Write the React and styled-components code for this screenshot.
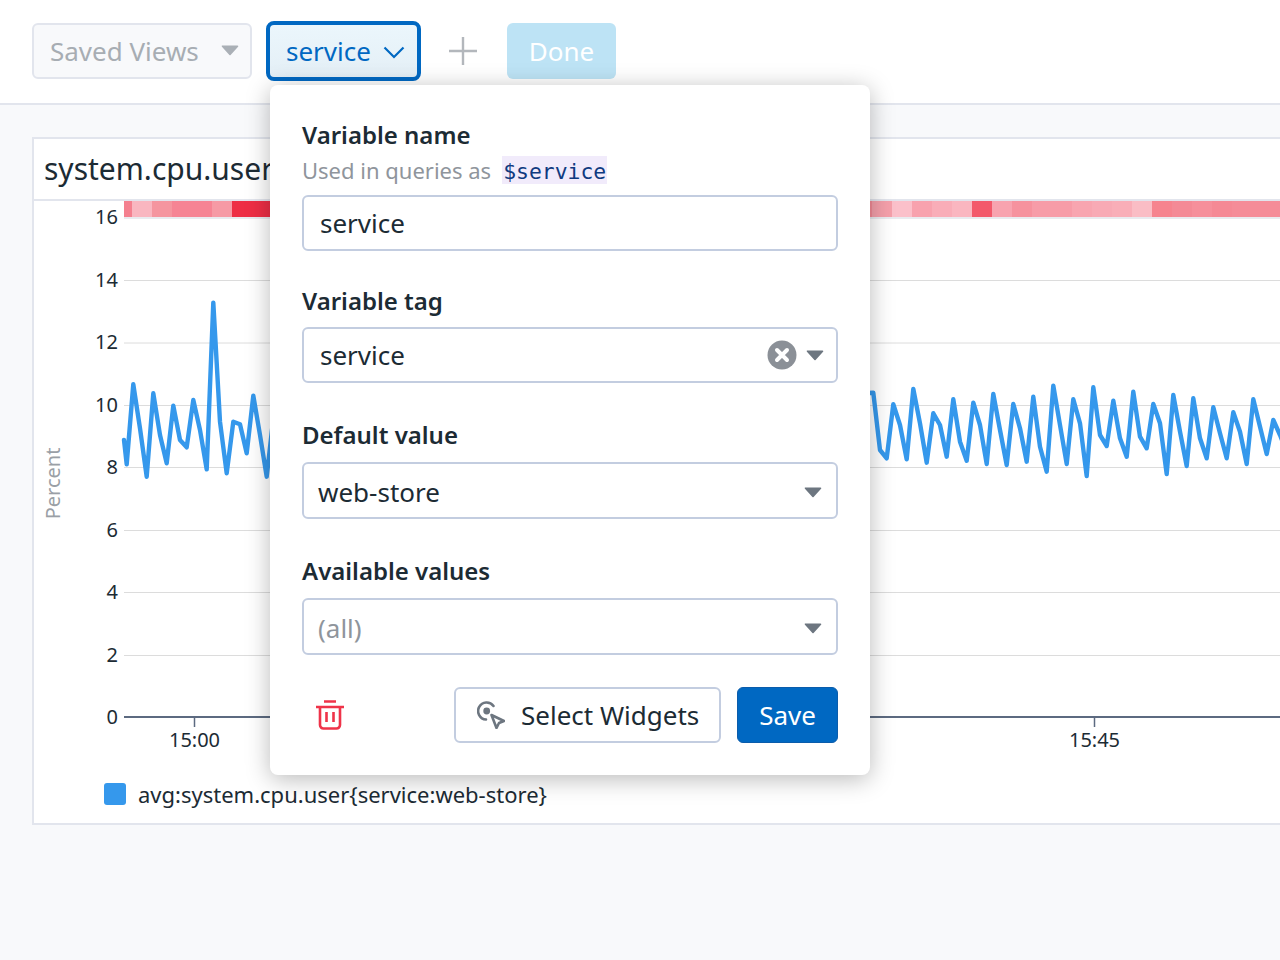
import React from "react";
import styled, { createGlobalStyle } from "styled-components";

const Global = createGlobalStyle`
  html, body { margin: 0; padding: 0; background: #f8f9fb; }
  * { box-sizing: border-box; }
  body { font-family: "Noto Sans", "Open Sans", sans-serif; color: #1c2b34; }
`;

const Page = styled.div`
  position: relative;
  width: 1280px;
  height: 960px;
  overflow: hidden;
  background: #f8f9fb;
`;

const Toolbar = styled.header`
  height: 105px;
  display: flex;
  align-items: center;
  padding: 0 0 2px 32px;
  background: #fff;
  border-bottom: 2px solid #e2e5ed;
`;

const SavedViews = styled.div`
  width: 220px;
  height: 56px;
  display: flex;
  align-items: center;
  justify-content: space-between;
  padding: 0 11px 0 16px;
  font-size: 26px;
  color: #a7adb3;
  background: #f8f9fb;
  border: 2px solid #e2e5ed;
  border-radius: 6px;
`;

const VariableChip = styled.div`
  width: 155px;
  height: 60px;
  margin-left: 14px;
  display: flex;
  align-items: center;
  justify-content: space-between;
  padding: 0 12px 0 16px;
  font-size: 26px;
  color: #0068c2;
  background: linear-gradient(#ebf6fc, #e4eff6);
  border: 4px solid #0068c2;
  border-radius: 8px;
`;

const Chevron = styled.svg`
  width: 22px;
  height: 13px;
  margin-top: 3px;
`;

const AddButton = styled.div`
  width: 28px;
  height: 28px;
  margin-left: 28px;
  display: flex;
`;

const DoneButton = styled.div`
  width: 109px;
  height: 56px;
  margin-left: 30px;
  display: flex;
  align-items: center;
  justify-content: center;
  font-size: 26px;
  color: #fff;
  background: #bde3f5;
  border-radius: 6px;
`;

const Content = styled.main`
  padding: 32px 0 0 32px;
`;

const Card = styled.section`
  width: 1260px;
  height: 688px;
  background: #fff;
  border: 2px solid #e2e5ed;
`;

const CardTitle = styled.div`
  height: 62px;
  padding: 0 0 2px 10px;
  display: flex;
  align-items: center;
  font-size: 30px;
  color: #1c2b34;
  border-bottom: 2px solid #e2e5ed;
`;

const ChartSvg = styled.svg`
  display: block;
  width: 1246px;
  height: 570px;
`;

const AxisLabel = styled.text`
  font-family: "Noto Sans", sans-serif;
  font-size: 20px;
  fill: #1c2b34;
`;

const UnitLabel = styled.text`
  font-family: "Noto Sans", sans-serif;
  font-size: 20px;
  fill: #9a9fa6;
`;

const Legend = styled.div`
  display: flex;
  align-items: center;
  gap: 12px;
  padding: 7px 0 0 70px;
  font-size: 22px;
  line-height: 32px;
  color: #1c2b34;
`;

const Swatch = styled.span`
  width: 22px;
  height: 22px;
  border-radius: 3px;
  background: #3598ec;
`;

const Popover = styled.div`
  position: absolute;
  left: 270px;
  top: 85px;
  width: 600px;
  height: 690px;
  padding: 32px 32px 0;
  background: #fff;
  border-radius: 8px;
  box-shadow: 0 4px 24px rgba(0, 0, 0, 0.28);
`;

const FieldLabel = styled.div`
  margin-top: ${(p) => p.$top || 0}px;
  font-size: 24px;
  line-height: 36px;
  font-weight: 600;
  color: #1c2b34;
`;

const Hint = styled.div`
  display: flex;
  align-items: center;
  gap: 11px;
  height: 30px;
  margin-top: 2px;
  font-size: 22px;
  color: #8f959c;
`;

const Code = styled.code`
  padding: 2px 1px 0;
  height: 28px;
  line-height: 28px;
  font-family: "DejaVu Sans Mono", "Liberation Mono", monospace;
  font-size: 21.4px;
  color: #0f3a80;
  background: #f1ebfb;
`;

const Field = styled.div`
  width: 536px;
  height: ${(p) => p.$h || 56}px;
  margin-top: ${(p) => p.$top || 4}px;
  display: flex;
  align-items: center;
  padding: ${(p) => p.$pad || 0}px ${(p) => p.$right ?? 12}px 0 ${(p) => p.$left ?? 16}px;
  font-size: 26px;
  color: ${(p) => (p.$muted ? "#8f959c" : "#1c2b34")};
  background: #fff;
  border: 2px solid #c3cde0;
  border-radius: 6px;
`;

const FieldValue = styled.span`
  flex: 1;
`;

const ClearIcon = styled.svg`
  width: 30px;
  height: 30px;
  margin-right: 9px;
`;

const Actions = styled.div`
  display: flex;
  align-items: center;
  margin-top: 32px;
`;

const DeleteButton = styled.div`
  width: 28px;
  height: 30px;
  margin-left: 14px;
  margin-right: auto;
  display: flex;
`;

const SecondaryButton = styled.div`
  width: 267px;
  height: 56px;
  display: flex;
  align-items: center;
  gap: 16px;
  padding: 0 0 0 21px;
  font-size: 26px;
  white-space: nowrap;
  color: #1c2b34;
  background: #fff;
  border: 2px solid #c3cde0;
  border-radius: 6px;
`;

const PrimaryButton = styled.div`
  width: 101px;
  height: 56px;
  margin-left: 16px;
  display: flex;
  align-items: center;
  justify-content: center;
  font-size: 26px;
  color: #fff;
  background: #0068c2;
  border: 1px solid #0b5cab;
  border-radius: 6px;
`;

const Caret = ({ color = "#6d7680", w = 18 }) => (
  <svg width={w} height="11" viewBox="0 0 18 11">
    <path d="M1.5 1.2h15L9 9.5z" fill={color} stroke={color} strokeWidth="1.6" strokeLinejoin="round" />
  </svg>
);

const gridYs = [280.5, 343, 405.5, 467.5, 530.5, 592.5, 655.5];
const yLabels = [
  ["16", 224], ["14", 287], ["12", 349], ["10", 412], ["8", 474],
  ["6", 537], ["4", 599], ["2", 662], ["0", 724],
];

const heatCells = [
  [124, 8, "#f4808f"], [132, 20, "#f9b6c0"], [152, 20, "#f5959f"], [172, 40, "#f68494"],
  [212, 20, "#f69aa5"], [232, 40, "#ee2e45"], [272, 600, "#f58c98"],
  [872, 20, "#f5a0ab"], [892, 20, "#fbc0ca"], [912, 20, "#f8a2ae"], [932, 20, "#f9adb8"],
  [952, 20, "#fab6c0"], [972, 20, "#f3596b"], [992, 20, "#f8a3af"], [1012, 20, "#f6929e"],
  [1032, 20, "#f79ca8"], [1052, 20, "#f79ca8"], [1072, 20, "#f8a5b0"], [1092, 20, "#f8aab5"],
  [1112, 20, "#f9aeb8"], [1132, 20, "#fabdc5"], [1152, 20, "#f6848f"], [1172, 20, "#f48a96"],
  [1192, 20, "#f68f9b"], [1212, 20, "#f58995"], [1232, 48, "#f58c98"],
];

const STEP = 20 / 3;
const leftSeries = [808, 568, 700, 845, 595, 720, 805, 632, 735, 757, 615, 705, 823, 323, 680, 835, 680, 688, 775, 602, 720, 845, 670]
  .map((z, i) => [126.67 + i * STEP, 195 + z / 3]);
const rightSeries = [608, 780, 805, 643, 705, 808, 597, 700, 818, 670, 705, 800, 628, 755, 812, 638, 705, 822, 612, 720, 825, 642, 715, 815, 620, 770, 845, 587, 705, 822, 628, 700, 858, 592, 735, 768, 632, 745, 800, 605, 740, 775, 642, 700, 852, 615, 725, 828, 625, 745, 805, 652, 730, 805, 667, 725, 822, 628, 710, 792, 690, 735]
  .map((z, i) => [873.33 + i * STEP, 190 + z / 3]);
const linePoints = [[124, 440], ...leftSeries, ...rightSeries, [1286, 450]]
  .map(([x, y]) => `${x.toFixed(1)},${y.toFixed(1)}`)
  .join(" ");

const Chart = () => (
  <ChartSvg viewBox="34 201 1246 570">
    <rect x="124" y="201" width="1156" height="18" fill="#e9ebef" />
    {heatCells.map(([x, w, c]) => (
      <rect key={x} x={x} y="201" width={w} height="16" fill={c} />
    ))}
    {gridYs.map((y) => (
      <line key={y} x1="124" x2="1280" y1={y} y2={y} stroke="#dcdcdc" strokeWidth="1" />
    ))}
    {yLabels.map(([t, y]) => (
      <AxisLabel key={t} x="118" y={y} textAnchor="end">{t}</AxisLabel>
    ))}
    <UnitLabel transform="translate(59.5 483.5) rotate(-90)" textAnchor="middle">Percent</UnitLabel>
    <polyline points={linePoints} fill="none" stroke="#3598ec" strokeWidth="4.4" strokeLinejoin="round" strokeLinecap="round" />
    <line x1="124" x2="1280" y1="717" y2="717" stroke="#5c6a80" strokeWidth="2" />
    {[194.5, 1094.5].map((x) => (
      <line key={x} x1={x} x2={x} y1="717" y2="727" stroke="#5c6a80" strokeWidth="1.5" />
    ))}
    <AxisLabel x="194.5" y="747" textAnchor="middle">15:00</AxisLabel>
    <AxisLabel x="1094.5" y="747" textAnchor="middle">15:45</AxisLabel>
  </ChartSvg>
);

export default function App() {
  return (
    <Page>
      <Global />
      <Toolbar>
        <SavedViews>
          Saved Views
          <Caret color="#aab0b6" />
        </SavedViews>
        <VariableChip>
          service
          <Chevron viewBox="0 0 22 13">
            <path d="M1.5 1.5l9.5 9.5 9.5-9.5" fill="none" stroke="#0068c2" strokeWidth="2.2" />
          </Chevron>
        </VariableChip>
        <AddButton>
          <svg width="28" height="28" viewBox="0 0 28 28">
            <path d="M14 0v28M0 14h28" stroke="#b3b7bc" strokeWidth="2.4" />
          </svg>
        </AddButton>
        <DoneButton>Done</DoneButton>
      </Toolbar>
      <Content>
        <Card>
          <CardTitle>system.cpu.user</CardTitle>
          <Chart />
          <Legend>
            <Swatch />
            avg:system.cpu.user{"{service:web-store}"}
          </Legend>
        </Card>
      </Content>
      <Popover>
        <FieldLabel>Variable name</FieldLabel>
        <Hint>
          Used in queries as
          <Code>$service</Code>
        </Hint>
        <Field $top={10} $left={16}>service</Field>
        <FieldLabel $top={32}>Variable tag</FieldLabel>
        <Field $top={8}>
          <FieldValue>service</FieldValue>
          <ClearIcon viewBox="0 0 30 30">
            <circle cx="15" cy="15" r="14.5" fill="#8b9097" />
            <path d="M10 10l10 10M20 10L10 20" stroke="#fff" strokeWidth="4" strokeLinecap="round" />
          </ClearIcon>
          <Caret />
        </Field>
        <FieldLabel $top={34}>Default value</FieldLabel>
        <Field $top={9} $h={57} $left={14} $right={14} $pad={3}>
          <FieldValue>web-store</FieldValue>
          <Caret />
        </Field>
        <FieldLabel $top={34}>Available values</FieldLabel>
        <Field $top={9} $h={57} $left={14} $right={14} $pad={3} $muted>
          <FieldValue>(all)</FieldValue>
          <Caret />
        </Field>
        <Actions>
          <DeleteButton>
            <svg width="28" height="30" viewBox="0 0 28 30">
              <path
                d="M8 1.5h12M0 7h28M4 7v18a3.5 3.5 0 0 0 3.5 3.5h13a3.5 3.5 0 0 0 3.5-3.5V7M10.5 12v10M17.5 12v10"
                fill="none"
                stroke="#ef3349"
                strokeWidth="2.6"
              />
            </svg>
          </DeleteButton>
          <SecondaryButton>
            <svg width="28" height="28" viewBox="0 0 28 28">
              <path d="M16.5 5A8.5 8.5 0 1 0 9 18.5" fill="none" stroke="#6d7680" strokeWidth="2.6" strokeLinecap="round" />
              <circle cx="9.7" cy="10" r="3.4" fill="#6d7680" />
              <path d="M14.5 14L27 20l-5 2-2.5 5z" fill="none" stroke="#6d7680" strokeWidth="2.6" strokeLinejoin="round" />
            </svg>
            Select Widgets
          </SecondaryButton>
          <PrimaryButton>Save</PrimaryButton>
        </Actions>
      </Popover>
    </Page>
  );
}
